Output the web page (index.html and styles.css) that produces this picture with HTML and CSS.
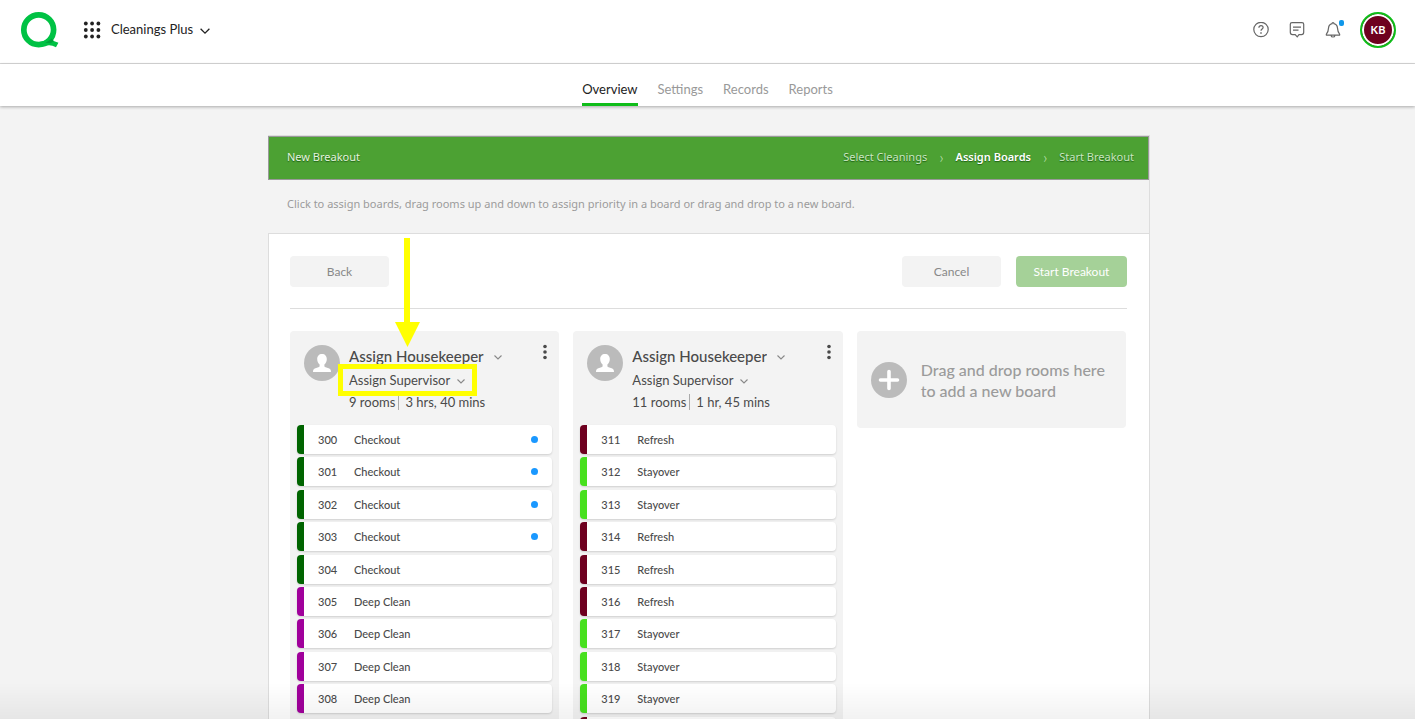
FILE: index.html
```html
<!DOCTYPE html>
<html lang="en">
<head>
<meta charset="utf-8">
<meta name="viewport" content="width=device-width, initial-scale=1">
<title>Cleanings Plus – New Breakout</title>
<link rel="stylesheet" href="styles.css">
</head>
<body>
<svg class="sprite" aria-hidden="true">
  <symbol id="chevron" viewBox="0 0 10 10"><path d="M1.500 3.500 5 7l3.500-3.500" fill="none" stroke="currentColor" stroke-width="1.100"/></symbol>
  <symbol id="person" viewBox="0 0 36 36"><circle cx="18" cy="18" r="18" fill="#bbb"/><path d="M18 9c3 0 4.800 2.100 4.800 5.100 0 2.400-1 4.300-2.400 5.300v1.500c0 .7.400 1 1.200 1.300l3 1c1.700.6 2.400 1.500 2.400 3.800H9c0-2.300.7-3.200 2.400-3.800l3-1c.8-.3 1.200-.6 1.200-1.300v-1.500c-1.400-1-2.400-2.900-2.400-5.300C13.200 11.100 15 9 18 9z" fill="#fff"/></symbol>
  <symbol id="kebab" viewBox="0 0 6 16"><g fill="#4a4a4a"><circle cx="3" cy="2.500" r="1.800"/><circle cx="3" cy="8" r="1.800"/><circle cx="3" cy="13.500" r="1.800"/></g></symbol>
</svg>

<header class="topbar">
  <a class="logo" href="#" aria-label="Home">
    <svg width="40" height="38" viewBox="0 0 40 38"><circle cx="18.700" cy="18.800" r="14.900" fill="none" stroke="#00c244" stroke-width="5.700"/><path d="M20 33.500c6-1.500 10-3.500 17.200.5" fill="none" stroke="#00c244" stroke-width="5"/><path d="M25 31.800c3-1.400 5.500-3 6.600-4.600l2.200 2.800-3 2.200z" fill="#00a33a"/></svg>
  </a>
  <button class="apps" aria-label="Apps">
    <svg width="18" height="18" viewBox="0 0 18 18"><g fill="#222"><circle cx="2.800" cy="2.500" r="1.900"/><circle cx="9.100" cy="2.500" r="1.900"/><circle cx="15.400" cy="2.500" r="1.900"/><circle cx="2.800" cy="9" r="1.900"/><circle cx="9.100" cy="9" r="1.900"/><circle cx="15.400" cy="9" r="1.900"/><circle cx="2.800" cy="15.500" r="1.900"/><circle cx="9.100" cy="15.500" r="1.900"/><circle cx="15.400" cy="15.500" r="1.900"/></g></svg>
  </button>
  <button class="product">Cleanings Plus
    <svg width="10" height="8" viewBox="0 0 10 8"><path d="M.6 1.800 5 6.200l4.400-4.400" fill="none" stroke="#222" stroke-width="1.300"/></svg>
  </button>
  <div class="tools">
    <button aria-label="Help"><svg width="16" height="16" viewBox="0 0 16 16" fill="none" stroke="#666" stroke-width="1.200"><circle cx="8" cy="7.500" r="7.200"/><path d="M5.900 5.700c0-1.300.9-2.100 2.100-2.100s2.100.8 2.100 1.900c0 1.500-2.100 1.600-2.100 3.300"/><path d="M8 10.200v1.600" stroke-width="1.500"/></svg></button>
    <button aria-label="Messages"><svg width="16" height="16" viewBox="0 0 16 16" fill="none" stroke="#666" stroke-width="1.200"><path d="M3 .6h10c1 0 1.700.7 1.700 1.700v8c0 1.300-.9 2.300-2.200 2.300H10l-1.800 2.200-2-2.200H3.500c-1.300 0-2.200-1-2.200-2.300v-8C1.300 1.300 2 .6 3 .6zM4 5.200h8M4 8.200h5.500"/></svg></button>
    <button class="bell" aria-label="Notifications"><svg width="16" height="16" viewBox="0 0 16 16" fill="none" stroke="#666" stroke-width="1.200"><path d="M8 .6c.7 0 1 .5 1 1.100 2.100.5 3.300 2.200 3.500 4.400.2 3 .5 4.500 2.100 6.100.3.500.1 1-.5 1H1.900c-.6 0-.8-.5-.5-1 1.600-1.600 1.900-3.100 2.100-6.100C3.700 3.900 4.900 2.200 7 1.700 7 1.100 7.300.6 8 .6zM6 13.300c.2 1.100 1 1.700 2 1.700s1.800-.6 2-1.700"/></svg></button>
  </div>
  <button class="account">KB</button>
</header>

<nav class="tabs">
  <a class="active" href="#">Overview</a>
  <a href="#">Settings</a>
  <a href="#">Records</a>
  <a href="#">Reports</a>
</nav>

<main>
  <section class="wizard">
    <div class="wizard-head">
      <h1>New Breakout</h1>
      <ol class="steps">
        <li>Select Cleanings</li>
        <li class="current">Assign Boards</li>
        <li>Start Breakout</li>
      </ol>
    </div>
    <p class="hint">Click to assign boards, drag rooms up and down to assign priority in a board or drag and drop to a new board.</p>
    <div class="panel">
      <div class="actions">
        <button class="btn">Back</button>
        <button class="btn cancel">Cancel</button>
        <button class="btn primary">Start Breakout</button>
      </div>
      <div class="boards">
        <article class="board">
          <div class="board-head">
            <svg class="avatar"><use href="#person"/></svg>
            <div class="assign">
              <div class="pick housekeeper"><select aria-label="Housekeeper"><option>Assign Housekeeper</option></select><svg class="chev"><use href="#chevron"/></svg></div>
              <div class="pick supervisor"><select aria-label="Supervisor"><option>Assign Supervisor</option></select><svg class="chev"><use href="#chevron"/></svg>
                <span class="mark"></span>
                <svg class="arrow" viewBox="0 0 25 109"><path d="M9 0h6v84h10L12.500 109 0 84h9z" fill="#ff0"/></svg>
              </div>
              <div class="totals"><span>9 rooms</span><span>3 hrs, 40 mins</span></div>
            </div>
            <button class="more" aria-label="Board options"><svg><use href="#kebab"/></svg></button>
          </div>
          <ul class="rooms">
            <li class="checkout new"><b>300</b>Checkout</li>
            <li class="checkout new"><b>301</b>Checkout</li>
            <li class="checkout new"><b>302</b>Checkout</li>
            <li class="checkout new"><b>303</b>Checkout</li>
            <li class="checkout"><b>304</b>Checkout</li>
            <li class="deep"><b>305</b>Deep Clean</li>
            <li class="deep"><b>306</b>Deep Clean</li>
            <li class="deep"><b>307</b>Deep Clean</li>
            <li class="deep"><b>308</b>Deep Clean</li>
          </ul>
        </article>
        <article class="board">
          <div class="board-head">
            <svg class="avatar"><use href="#person"/></svg>
            <div class="assign">
              <div class="pick housekeeper"><select aria-label="Housekeeper"><option>Assign Housekeeper</option></select><svg class="chev"><use href="#chevron"/></svg></div>
              <div class="pick supervisor"><select aria-label="Supervisor"><option>Assign Supervisor</option></select><svg class="chev"><use href="#chevron"/></svg></div>
              <div class="totals"><span>11 rooms</span><span>1 hr, 45 mins</span></div>
            </div>
            <button class="more" aria-label="Board options"><svg><use href="#kebab"/></svg></button>
          </div>
          <ul class="rooms">
            <li class="refresh"><b>311</b>Refresh</li>
            <li class="stayover"><b>312</b>Stayover</li>
            <li class="stayover"><b>313</b>Stayover</li>
            <li class="refresh"><b>314</b>Refresh</li>
            <li class="refresh"><b>315</b>Refresh</li>
            <li class="refresh"><b>316</b>Refresh</li>
            <li class="stayover"><b>317</b>Stayover</li>
            <li class="stayover"><b>318</b>Stayover</li>
            <li class="stayover"><b>319</b>Stayover</li>
            <li class="refresh"></li>
          </ul>
        </article>
        <div class="add-board">
          <svg width="36" height="36" viewBox="0 0 36 36"><circle cx="18" cy="18" r="18" fill="#bbb"/><path d="M18 9.500v17M9.500 18h17" stroke="#fff" stroke-width="3.600" stroke-linecap="round"/></svg>
          <p>Drag and drop rooms here to add a new board</p>
        </div>
      </div>
    </div>
  </section>
</main>
<div class="fade"></div>
</body>
</html>
```
FILE: styles.css
```css
* { box-sizing: border-box; }

body {
  margin: 0;
  height: 100vh;
  display: flex;
  flex-direction: column;
  background: #f3f3f3;
  color: #4a4a4a;
  font: 13px/20px Lato, sans-serif;
}

button, select {
  margin: 0;
  padding: 0;
  border: 0;
  background: none;
  color: inherit;
  font: inherit;
  cursor: pointer;
}

h1, p, ul, ol { margin: 0; padding: 0; list-style: none; }
a { color: inherit; text-decoration: none; }
svg { display: block; flex: none; }
.sprite { position: absolute; width: 0; height: 0; }

.topbar {
  display: flex;
  align-items: center;
  height: 64px;
  padding: 0 20px 4px;
  background: #fff;
  border-bottom: 1px solid #d8d8d8;
  color: #222;
}
.apps { margin-left: 23px; }
.product { display: flex; align-items: center; gap: 7px; margin-left: 10px; padding-bottom: 1px; }
.product svg { margin-top: 4px; }
.tools { display: flex; gap: 20px; margin-left: auto; }
.bell { position: relative; }
.bell::after {
  content: "";
  position: absolute;
  top: -2px;
  right: -3px;
  width: 5px;
  height: 6px;
  border-radius: 2px;
  background: #0f97ea;
}
.account {
  width: 36px;
  height: 36px;
  margin: 0 -1px 0 19px;
  border: 2px solid #0fbd19;
  border-radius: 50%;
  background: #6e001f;
  box-shadow: inset 0 0 0 2px #fff;
  color: #fff;
  font-size: 11px;
  font-weight: 700;
}

.tabs {
  display: flex;
  justify-content: center;
  gap: 20px;
  flex: none;
  padding-top: 15px;
  background: #fff;
  box-shadow: 0 1px 3px rgba(0, 0, 0, .3);
  position: relative;
  z-index: 1;
  color: #999;
}
.tabs a { padding-bottom: 4px; border-bottom: 3px solid transparent; }
.tabs .active { color: #222; border-color: #0fbd19; }

main {
  flex: 1;
  min-height: 0;
  overflow: auto;
  scrollbar-width: none;
  padding: 29px 0 0 3px;
}
.wizard {
  max-width: 882px;
  margin: 0 auto;
  border-top: 1px solid #ddd;
  border-right: 1px solid #ddd;
}
.wizard-head, .hint { font-family: "Noto Sans", sans-serif; font-size: 11px; }
.wizard-head {
  display: flex;
  align-items: center;
  justify-content: space-between;
  height: 44px;
  padding: 0 14px 2px 18px;
  border: 1px solid #999;
  background: #4ca133;
  color: #e4f3df;
  text-shadow: 0 1px 1px rgba(0, 60, 0, .6);
}
.wizard-head h1 { font-size: 11px; font-weight: 400; }
.steps { display: flex; color: #c9e6c0; }
.steps li { display: flex; }
.steps li + li::before {
  content: "›";
  margin: 0 12px;
  color: #c9e6c0;
  font: 300 16px/19px Lato, sans-serif;
  text-shadow: none;
}
.steps .current { color: #fff; font-weight: 600; }
.hint { padding: 14px 19px 19px; color: #9b9b9b; }

.panel {
  padding: 22px 22px 0 21px;
  background: #fff;
  border-top: 1px solid #ddd;
  border-left: 1px solid #ddd;
}
.actions {
  display: flex;
  gap: 15px;
  padding-bottom: 21px;
  margin-bottom: 22px;
  border-bottom: 1px solid #ddd;
}
.btn {
  width: 99px;
  height: 31px;
  border-radius: 4px;
  background: #f3f3f3;
  color: #888;
  font-size: 12px;
}
.cancel { margin-left: auto; }
.primary { width: 111px; background: #a5d198; color: #fff; }

.boards {
  display: grid;
  grid-template-columns: repeat(3, 1fr);
  gap: 14px;
  align-items: start;
  padding-right: 1px;
}
.board, .add-board { background: #f3f3f3; border-radius: 4px; }
.board-head { display: flex; gap: 9px; padding: 13px 11px 13px 14px; }
.avatar { width: 36px; height: 36px; margin-top: 1px; }
.assign { flex: 1; }
.pick { display: flex; align-items: center; gap: 5px; position: relative; width: max-content; }
.pick select { appearance: none; }
.pick .chev { width: 10px; height: 10px; margin-top: 2px; color: #888; }
.housekeeper { height: 24px; gap: 9px; font-size: 15px; font-weight: 500; }
.supervisor { height: 24px; }
.mark {
  position: absolute;
  inset: -4px -11px -4px -11px;
  border: 5px solid #ff0;
  pointer-events: none;
}
.arrow {
  position: absolute;
  left: 46px;
  bottom: calc(100% + 21px);
  width: 25px;
  height: 109px;
  pointer-events: none;
}
.totals { line-height: 20px; }
.totals span + span { margin-left: 3px; padding-left: 6px; border-left: 1px solid #aaa; }
.more { align-self: flex-start; }
.more svg { width: 6px; height: 16px; }

.rooms { padding: 0 7px 7px; font-size: 11px; font-weight: 500; }
.rooms li {
  display: flex;
  align-items: center;
  height: 29px;
  margin-bottom: 3px;
  padding-right: 14px;
  border-left: 7px solid var(--kind);
  border-radius: 4px;
  background: #fff;
  box-shadow: 0 1px 2px rgba(0, 0, 0, .15);
}
.rooms li:nth-child(5n+2), .rooms li:nth-child(5n+4) { margin-bottom: 4px; }
.rooms b { width: 36px; margin-left: 14px; font-weight: inherit; }
.new::after {
  content: "";
  width: 7px;
  height: 7px;
  margin-left: auto;
  border-radius: 50%;
  background: #1a98ff;
}
.checkout { --kind: #006400; }
.deep { --kind: #a0009b; }
.refresh { --kind: #6e001f; }
.stayover { --kind: #47e01e; }

.add-board {
  display: flex;
  align-items: center;
  gap: 14px;
  min-height: 97px;
  padding: 14px;
  color: #9b9b9b;
  font-size: 16px;
  font-weight: 500;
  line-height: 21px;
}

.fade {
  position: fixed;
  inset: auto 0 0;
  height: 36px;
  background: linear-gradient(transparent, rgba(0, 0, 0, .05));
  pointer-events: none;
  z-index: 2;
}
```
